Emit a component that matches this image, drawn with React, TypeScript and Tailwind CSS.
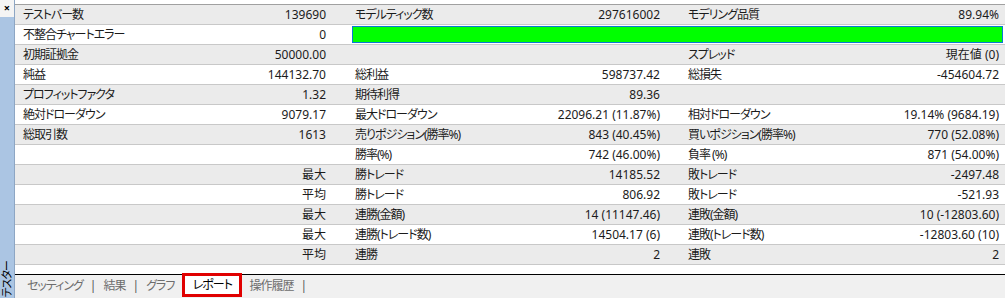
type Cell = [string, string];

const rows: { c1: Cell; c2?: Cell; c3?: Cell; bar?: boolean }[] = [
    { c1: ["テストバー数", "139690"], c2: ["モデルティック数", "297616002"], c3: ["モデリング品質", "89.94%"] },
    { c1: ["不整合チャートエラー", "0"], bar: true },
    { c1: ["初期証拠金", "50000.00"], c2: ["", ""], c3: ["スプレッド", "現在値 (0)"] },
    { c1: ["純益", "144132.70"], c2: ["総利益", "598737.42"], c3: ["総損失", "-454604.72"] },
    { c1: ["プロフィットファクタ", "1.32"], c2: ["期待利得", "89.36"], c3: ["", ""] },
    { c1: ["絶対ドローダウン", "9079.17"], c2: ["最大ドローダウン", "22096.21 (11.87%)"], c3: ["相対ドローダウン", "19.14% (9684.19)"] },
    { c1: ["総取引数", "1613"], c2: ["売りポジション(勝率%)", "843 (40.45%)"], c3: ["買いポジション(勝率%)", "770 (52.08%)"] },
    { c1: ["", ""], c2: ["勝率(%)", "742 (46.00%)"], c3: ["負率 (%)", "871 (54.00%)"] },
    { c1: ["", "最大"], c2: ["勝トレード", "14185.52"], c3: ["敗トレード", "-2497.48"] },
    { c1: ["", "平均"], c2: ["勝トレード", "806.92"], c3: ["敗トレード", "-521.93"] },
    { c1: ["", "最大"], c2: ["連勝(金額)", "14 (11147.46)"], c3: ["連敗(金額)", "10 (-12803.60)"] },
    { c1: ["", "最大"], c2: ["連勝(トレード数)", "14504.17 (6)"], c3: ["連敗(トレード数)", "-12803.60 (10)"] },
    { c1: ["", "平均"], c2: ["連勝", "2"], c3: ["連敗", "2"] },
];

const tabs = ["セッティング", "結果", "グラフ", "レポート", "操作履歴"];

const App = () => {
    return (
        <div
            className="flex h-[298px] w-[1005px] overflow-hidden bg-white text-[12px] text-[#1b1b1b] [font-feature-settings:'palt']"
            style={{ fontFamily: '"Noto Sans", "Noto Sans CJK JP", sans-serif' }}
        >
            {/* side panel */}
            <div className="flex w-[15px] flex-col border-r border-[#8da6c4]">
                <div className="flex h-[17px] items-start justify-center bg-[#f4f4f4] pt-[1px] text-[11px] font-bold leading-[14px] text-black">
                    ×
                </div>
                <div className="flex flex-1 flex-col items-center justify-end bg-[#abc5e3] pb-[1px]">
                    <span className="rotate-180 text-[11px] leading-[12px] tracking-[-1px] text-black [text-orientation:sideways] [writing-mode:vertical-rl]">
                        テスター
                    </span>
                </div>
            </div>

            <div className="flex flex-1 flex-col">
                <div className="h-[4px] bg-white" />
                <div className="flex flex-col border-t border-[#a0a0a0]">
                    {rows.map((r, i) => (
                        <div
                            key={i}
                            className={`flex h-[20px] items-center border-b border-[#c8c8c8] leading-[19px] ${i % 2 === 0 ? "bg-[#ebebeb]" : "bg-white"}`}
                        >
                            <div className="flex w-[325px] justify-between pl-[8px] pr-[14px]">
                                <span className="tracking-[-1px]">{r.c1[0]}</span>
                                <span>{r.c1[1]}</span>
                            </div>
                            {r.bar ? (
                                <div className="ml-[12px] mr-[2px] h-[17px] flex-1 border border-[#0a78d4] bg-[#00ff00]" />
                            ) : (
                                <>
                                    <div className="flex w-[328px] justify-between pl-[15px] pr-[8px]">
                                        <span className="tracking-[-1px]">{r.c2?.[0]}</span>
                                        <span>{r.c2?.[1]}</span>
                                    </div>
                                    <div className="flex flex-1 justify-between pl-[20px] pr-[6px]">
                                        <span className="tracking-[-1px]">{r.c3?.[0]}</span>
                                        <span>{r.c3?.[1]}</span>
                                    </div>
                                </>
                            )}
                        </div>
                    ))}
                </div>
                <div className="flex-1 bg-white" />
                <div className="flex h-[24px] items-start border-t border-black bg-[#f0f0f0] pl-[12px] text-[#6d6d6d]">
                    {tabs.map((t, i) =>
                        t === "レポート" ? (
                            <div
                                key={t}
                                className="-mt-[2px] ml-[8px] mr-[7px] flex h-[24px] w-[60px] items-center justify-center border-[3px] border-[#e00000] bg-white tracking-[-1px] text-black"
                            >
                                {t}
                            </div>
                        ) : (
                            <div key={t} className="flex h-[21px] items-center">
                                <span className="tracking-[-1px]">{t}</span>
                                {i !== 2 && <span className="mx-[7px] text-[#555]">|</span>}
                            </div>
                        )
                    )}
                </div>
            </div>
        </div>
    );
};

export default App;
